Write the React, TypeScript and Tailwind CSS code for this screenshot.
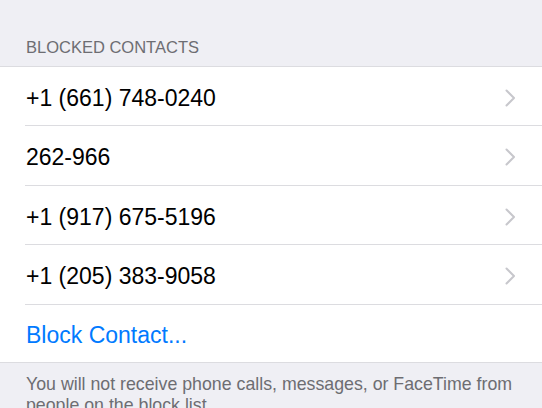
import { Fragment } from "react";

const rows = [
  { number: "+1 (661) 748-0240", h: "h-[58px]" },
  { number: "262-966", h: "h-[59px]" },
  { number: "+1 (917) 675-5196", h: "h-[58px]" },
  { number: "+1 (205) 383-9058", h: "h-[59px]" },
];

function Chevron() {
  return (
    <svg width="11" height="18" viewBox="0 0 11 18" fill="none" className="shrink-0">
      <path d="M1.5 1.5 L9 9 L1.5 16.5" stroke="#c7c7cc" strokeWidth="2" strokeLinecap="round" strokeLinejoin="round" />
    </svg>
  );
}

export default function App() {
  return (
    <div className="min-h-[408px] w-[542px] overflow-hidden bg-[#efeff4] font-['Liberation_Sans',Arial,sans-serif]">
      <div className="flex h-[66px] items-end px-[26px] pb-[9px] text-[16.5px] leading-[20px] text-[#6d6d72]">BLOCKED CONTACTS</div>
      <div className="border-y border-[#dcdce0] bg-white">
        {rows.map((r) => (
          <Fragment key={r.number}>
            <div className={`flex ${r.h} items-center justify-between pl-[26px] pr-[26px] pt-[3px] text-[23px] text-black`}>
              <span className="pt-px">{r.number}</span>
              <Chevron />
            </div>
            <div className="ml-[25px] h-px bg-[#dcdce0]" />
          </Fragment>
        ))}
        <div className="flex h-[57px] items-center pl-[26px] pt-[4px] text-[23px] text-[#007aff]">Block Contact...</div>
      </div>
      <div className="px-[26px] pt-[11px] text-[17.75px] leading-[21px] text-[#6d6d72]">
        You will not receive phone calls, messages, or FaceTime from people on the block list.
      </div>
    </div>
  );
}
